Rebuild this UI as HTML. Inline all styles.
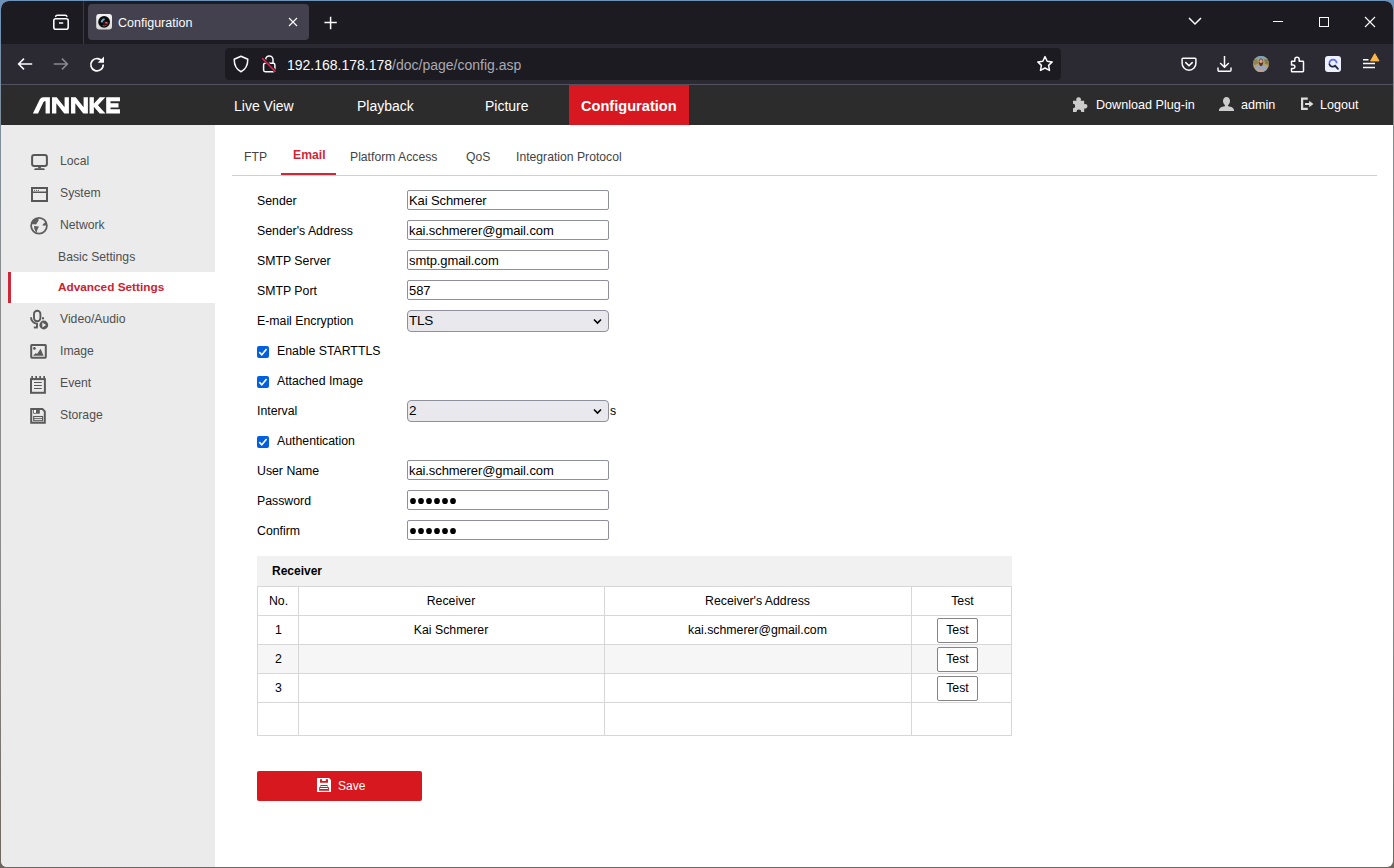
<!DOCTYPE html>
<html><head><meta charset="utf-8">
<style>
*{box-sizing:border-box;margin:0;padding:0}
html,body{width:1394px;height:868px;overflow:hidden}
body{background:linear-gradient(180deg,#6d93bb 0,#7b8ea0 90px,#8c8c8c 300px,#8a8a8a 600px,#6e665c 868px)}
body{font-family:"Liberation Sans",sans-serif;position:relative}
.a{position:absolute;white-space:nowrap}
#win{position:absolute;left:0;top:0;width:1394px;height:868px;background:#fff;clip-path:inset(1px round 8px 8px 6px 6px)}
#frame{position:absolute;left:0;top:0;width:1394px;height:868px;border:1px solid #6f8aa6;border-radius:8px;pointer-events:none}
#tabs{position:absolute;left:0;top:0;width:1394px;height:44px;background:#1c1b22}
#tool{position:absolute;left:0;top:44px;width:1394px;height:40px;background:#2b2a33}
#sep{position:absolute;left:0;top:84px;width:1394px;height:1px;background:#52525e}
#hdr{position:absolute;left:0;top:85px;width:1394px;height:40px;background:#2c2c2c}
#side{position:absolute;left:0;top:125px;width:215px;height:743px;background:#ebebeb}
.nav{color:#fff;font-size:14px;line-height:20px}
.si{color:#4f4f4f;font-size:12.2px;line-height:16px}
.lbl{color:#000;font-size:12.3px;line-height:16px}
.inp{position:absolute;left:407px;width:202px;height:20px;border:1px solid #8f8f9d;border-radius:2px;background:#fff;font-size:13px;line-height:18px;padding-left:1px;padding-top:1px;letter-spacing:-0.1px;color:#000}
.sel{position:absolute;left:407px;width:202px;height:22px;border:1px solid #8f8f9d;border-radius:4px;background:#e9e9ed;font-size:13.5px;line-height:19px;padding-left:1px;color:#000;letter-spacing:-0.3px}
.cb{position:absolute;left:257px;width:12px;height:12px;border-radius:2px;background:#0060df}
.btn{left:937px;width:41px;height:25px;border:1px solid #858585;border-radius:2px;background:#fff;font-size:12.3px;line-height:23px;text-align:center;color:#000}
.tabt{color:#444;font-size:12.2px;line-height:16px}
</style></head><body>
<div id="win">
 <div id="tabs"></div>
 <div class="a" style="left:83px;top:1px;width:1px;height:43px;background:#3a3944"></div>
 <div class="a" style="left:88px;top:4px;width:221px;height:36px;background:#42414d;border-radius:4px"></div>
 <div class="a" style="left:118px;top:15px;color:#fbfbfe;font-size:12.5px;line-height:16px">Configuration</div>

 <div id="tool"></div>
 <div class="a" style="left:225px;top:48px;width:836px;height:32px;background:#1c1b22;border-radius:4px"></div>
 <div class="a" style="left:287px;top:56px;font-size:14px;line-height:18px;color:#fbfbfe">192.168.178.178<span style="color:#a9a9b1">/doc/page/config.asp</span></div>

 <!-- firefox chrome icons -->
 <svg class="a" style="left:50px;top:12px" width="22" height="22" viewBox="0 0 22 22"><path d="M5.7 4.5Q5.7 3.2 7.4 3.2H15.2Q16.9 3.2 16.9 4.5" stroke="#fbfbfe" stroke-width="1.4" stroke-linecap="round" fill="none"/><rect x="3.8" y="6.8" width="14.4" height="10.5" rx="2" fill="none" stroke="#fbfbfe" stroke-width="1.6"/><path d="M9 11h4.2" stroke="#fbfbfe" stroke-width="1.7"/></svg>
 <svg class="a" style="left:96px;top:14px" width="16" height="16" viewBox="0 0 16 16"><defs><linearGradient id="fg" x1="0" y1="0" x2="0" y2="1"><stop offset="0" stop-color="#f6f6f6"/><stop offset="1" stop-color="#d6d6d6"/></linearGradient></defs><rect x="0.2" y="0" width="15.8" height="15.6" rx="3" fill="url(#fg)"/><circle cx="8.1" cy="7.9" r="5.9" fill="#0b0b0b"/><path d="M12 8.6A4 4 0 0 1 6.6 11.6" stroke="#9a9a9a" stroke-width="0.7" fill="none"/><circle cx="9.3" cy="9.2" r="2.2" fill="#4e0b12"/><path d="M5.6 8.4Q6 5.6 8.6 5.1" stroke="#5ab4dc" stroke-width="1.9" fill="none"/><ellipse cx="10.3" cy="8.8" rx="1.2" ry="0.7" fill="#e07a8c"/></svg>
 <svg class="a" style="left:287px;top:16px" width="12" height="12" viewBox="0 0 12 12"><path d="M2 2L10 10M10 2L2 10" stroke="#fbfbfe" stroke-width="1.1"/></svg>
 <svg class="a" style="left:323px;top:15px" width="16" height="16" viewBox="0 0 16 16"><path d="M7.6 1.8v12.4M1.4 7.6h12.4" stroke="#fbfbfe" stroke-width="1.5"/></svg>
 <svg class="a" style="left:1187px;top:15px" width="16" height="12" viewBox="0 0 16 12"><path d="M2 3l6 6 6-6" stroke="#fbfbfe" stroke-width="1.5" fill="none"/></svg>
 <div class="a" style="left:1273px;top:21px;width:10px;height:1px;background:#fbfbfe"></div>
 <div class="a" style="left:1319px;top:17px;width:10px;height:10px;border:1px solid #fbfbfe"></div>
 <svg class="a" style="left:1364px;top:16px" width="12" height="12" viewBox="0 0 12 12"><path d="M1 1L11 11M11 1L1 11" stroke="#fbfbfe" stroke-width="1.1"/></svg>

 <svg class="a" style="left:15px;top:55px" width="20" height="18" viewBox="0 0 20 18"><path d="M3.6 9H17.2M9 3.6L3.6 9L9 14.4" stroke="#fbfbfe" stroke-width="1.5" fill="none"/></svg>
 <svg class="a" style="left:51px;top:55px" width="20" height="18" viewBox="0 0 20 18"><path d="M2.8 9H16.4M11 3.6L16.4 9L11 14.4" stroke="#8a8990" stroke-width="1.5" fill="none"/></svg>
 <svg class="a" style="left:88px;top:55px" width="18" height="18" viewBox="0 0 18 18"><path d="M14.3 6.5A6.2 6.2 0 1 0 15.2 9.5" stroke="#fbfbfe" stroke-width="1.7" fill="none"/><path d="M16 1.5V7.8H9.7z" fill="#fbfbfe"/></svg>

 <svg class="a" style="left:232px;top:55px" width="18" height="18" viewBox="0 0 18 18"><path d="M9 1.2L2.2 4.3c0 6.5 2.3 10.3 6.8 12.4 4.5-2.1 6.8-5.9 6.8-12.4z" stroke="#fbfbfe" stroke-width="1.5" fill="none" stroke-linejoin="round"/></svg>
 <svg class="a" style="left:260px;top:54px" width="18" height="20" viewBox="0 0 18 20"><path d="M5.6 9V5.6a3.7 3.7 0 0 1 7.4 0V9" stroke="#fbfbfe" stroke-width="1.5" fill="none"/><rect x="3.6" y="9.3" width="11.3" height="8.4" rx="1.6" stroke="#fbfbfe" stroke-width="1.5" fill="none"/><path d="M2.4 4L15.6 17.6" stroke="#1c1b22" stroke-width="3"/><path d="M2.2 4.2L15.6 17.7" stroke="#e22850" stroke-width="1.5"/></svg>
 <svg class="a" style="left:1036px;top:55px" width="18" height="18" viewBox="0 0 18 18"><path d="M9 1.6l2.2 4.6 5 .7-3.6 3.5.9 5-4.5-2.4-4.5 2.4.9-5L1.8 6.9l5-.7z" stroke="#fbfbfe" stroke-width="1.5" fill="none" stroke-linejoin="round"/></svg>

 <svg class="a" style="left:1180px;top:56px" width="18" height="17" viewBox="0 0 18 17"><path d="M3 2.2h12a.9.9 0 0 1 .9.9V7A6.9 6.9 0 0 1 9 14.2 6.9 6.9 0 0 1 2.1 7V3.1a.9.9 0 0 1 .9-.9z" stroke="#fbfbfe" stroke-width="1.5" fill="none"/><path d="M5.8 6.6L9 9.7l3.2-3.1" stroke="#fbfbfe" stroke-width="1.6" fill="none" stroke-linecap="round"/></svg>
 <svg class="a" style="left:1216px;top:55px" width="17" height="18" viewBox="0 0 17 18"><path d="M8.5 1v11M4.2 8l4.3 4.3L12.8 8" stroke="#fbfbfe" stroke-width="1.5" fill="none"/><path d="M2 12.5v2.5a1.3 1.3 0 0 0 1.3 1.3h10.4a1.3 1.3 0 0 0 1.3-1.3v-2.5" stroke="#fbfbfe" stroke-width="1.5" fill="none"/></svg>
 <svg class="a" style="left:1253px;top:56px" width="16" height="16" viewBox="0 0 16 16"><defs><clipPath id="cc"><circle cx="8" cy="8" r="8"/></clipPath></defs><g clip-path="url(#cc)"><rect width="16" height="16" fill="#b3a26a"/><rect x="0" y="0" width="16" height="2.6" fill="#6fa4cc"/><path d="M0 4L4 3L6 7L2 9L0 8Z" fill="#8f8456"/><path d="M11 3L16 4V9L12 8Z" fill="#857a50"/><path d="M2 16L2.8 10.5Q4 9 8 9.2Q12 9 13.2 10.5L14 16Z" fill="#97a6bc"/><path d="M6 4.4Q6.3 2.4 8 2.4Q9.8 2.4 10 4.4L10.2 7Q9.8 10 8 10.4Q6.2 10 5.8 7Z" fill="#5a3424"/><ellipse cx="8" cy="5.2" rx="1.6" ry="1.9" fill="#d6a28a"/><path d="M3 13Q6 14.2 9 13.8L12 16H4Z" fill="#cf9f86"/></g></svg>
 <svg class="a" style="left:1289px;top:55px" width="17" height="18" viewBox="0 0 17 18"><path d="M2.6 6.2h3.2V4.4a2.2 2.2 0 0 1 4.4 0v1.8h3.6a.7.7 0 0 1 .7.7v9.2a.7.7 0 0 1-.7.7H3.2a.7.7 0 0 1-.7-.7v-2.5h1.6a1.8 1.8 0 0 0 0-3.6H2.5V6.9a.7.7 0 0 1 .1-.7z" stroke="#fbfbfe" stroke-width="1.5" fill="none" stroke-linejoin="round"/></svg>
 <svg class="a" style="left:1325px;top:56px" width="16" height="16" viewBox="0 0 16 16"><rect width="16" height="16" rx="3" fill="#eef0ff"/><path d="M4.4 7.2a3.6 3.6 0 0 1 7.2 0" stroke="#5b6cf5" stroke-width="1.8" fill="none"/><path d="M4.4 8.2a3.6 3.6 0 0 0 5.8 1.6l2.8 3" stroke="#1d2744" stroke-width="1.8" fill="none" stroke-linecap="round"/></svg>
 <svg class="a" style="left:1360px;top:52px" width="22" height="20" viewBox="0 0 22 20"><path d="M3 7.7h5.5M3 11.5h12M3 15.6h12" stroke="#fbfbfe" stroke-width="1.5"/><path d="M14.8 1.7l4.2 7.2h-8.4z" fill="#ffb74a" stroke="#ffb74a" stroke-width="1" stroke-linejoin="round"/></svg>

 <div id="sep"></div>

 <div id="hdr"></div>
 <div class="a nav" style="left:234px;top:96px">Live View</div>
 <div class="a nav" style="left:357px;top:96px">Playback</div>
 <div class="a nav" style="left:485px;top:96px">Picture</div>
 <div class="a" style="left:569px;top:85px;width:120px;height:40px;background:#d71820"></div>
 <div class="a nav" style="left:581px;top:96px;font-weight:bold;font-size:14.6px">Configuration</div>
 <div class="a" style="left:1096px;top:97px;color:#fff;font-size:12.6px;line-height:16px">Download Plug-in</div>
 <div class="a" style="left:1241px;top:97px;color:#fff;font-size:12.6px;line-height:16px">admin</div>
 <div class="a" style="left:1320px;top:97px;color:#fff;font-size:12.6px;line-height:16px">Logout</div>


 <!-- tabs -->
 <div class="a tabt" style="left:244px;top:149px">FTP</div>
 <div class="a tabt" style="left:293px;top:147px;color:#d02637;font-weight:bold">Email</div>
 <div class="a tabt" style="left:350px;top:149px">Platform Access</div>
 <div class="a tabt" style="left:466px;top:149px">QoS</div>
 <div class="a tabt" style="left:516px;top:149px">Integration Protocol</div>
 <div class="a" style="left:232px;top:175px;width:1145px;height:1px;background:#d0d0d0"></div>
 <div class="a" style="left:281px;top:173px;width:55px;height:2px;background:#d02637"></div>

 <!-- form -->
 <div class="a lbl" style="left:257px;top:193px">Sender</div>
 <div class="inp" style="top:190px">Kai Schmerer</div>
 <div class="a lbl" style="left:257px;top:223px">Sender's Address</div>
 <div class="inp" style="top:220px">kai.schmerer@gmail.com</div>
 <div class="a lbl" style="left:257px;top:253px">SMTP Server</div>
 <div class="inp" style="top:250px">smtp.gmail.com</div>
 <div class="a lbl" style="left:257px;top:283px">SMTP Port</div>
 <div class="inp" style="top:280px">587</div>
 <div class="a lbl" style="left:257px;top:313px">E-mail Encryption</div>
 <div class="sel" style="top:310px">TLS<svg class="a" style="left:185px;top:7px" width="9" height="7" viewBox="0 0 9 7"><path d="M1 1.5L4.5 5L8 1.5" fill="none" stroke="#000" stroke-width="1.6"/></svg></div>

 <div class="cb" style="top:346px"><svg width="12" height="12" viewBox="0 0 12 12" style="position:absolute;left:0;top:0"><path d="M2.3 6.1L4.8 8.7L9.6 3" stroke="#fff" stroke-width="1.6" fill="none"/></svg></div>
 <div class="a lbl" style="left:277px;top:343px">Enable STARTTLS</div>
 <div class="cb" style="top:376px"><svg width="12" height="12" viewBox="0 0 12 12" style="position:absolute;left:0;top:0"><path d="M2.3 6.1L4.8 8.7L9.6 3" stroke="#fff" stroke-width="1.6" fill="none"/></svg></div>
 <div class="a lbl" style="left:277px;top:373px">Attached Image</div>
 <div class="a lbl" style="left:257px;top:403px">Interval</div>
 <div class="sel" style="top:400px">2<svg class="a" style="left:185px;top:7px" width="9" height="7" viewBox="0 0 9 7"><path d="M1 1.5L4.5 5L8 1.5" fill="none" stroke="#000" stroke-width="1.6"/></svg></div>
 <div class="a lbl" style="left:610px;top:403px">s</div>
 <div class="cb" style="top:436px"><svg width="12" height="12" viewBox="0 0 12 12" style="position:absolute;left:0;top:0"><path d="M2.3 6.1L4.8 8.7L9.6 3" stroke="#fff" stroke-width="1.6" fill="none"/></svg></div>
 <div class="a lbl" style="left:277px;top:433px">Authentication</div>
 <div class="a lbl" style="left:257px;top:463px">User Name</div>
 <div class="inp" style="top:460px">kai.schmerer@gmail.com</div>
 <div class="a lbl" style="left:257px;top:493px">Password</div>
 <div class="inp" style="top:490px"><svg class="a" style="left:0;top:0" width="60" height="18" viewBox="0 0 60 18"><ellipse cx="5" cy="10" rx="2.9" ry="3.1" fill="#000"/><ellipse cx="13" cy="10" rx="2.9" ry="3.1" fill="#000"/><ellipse cx="21" cy="10" rx="2.9" ry="3.1" fill="#000"/><ellipse cx="29" cy="10" rx="2.9" ry="3.1" fill="#000"/><ellipse cx="37" cy="10" rx="2.9" ry="3.1" fill="#000"/><ellipse cx="45" cy="10" rx="2.9" ry="3.1" fill="#000"/></svg></div>
 <div class="a lbl" style="left:257px;top:523px">Confirm</div>
 <div class="inp" style="top:520px"><svg class="a" style="left:0;top:0" width="60" height="18" viewBox="0 0 60 18"><ellipse cx="5" cy="10" rx="2.9" ry="3.1" fill="#000"/><ellipse cx="13" cy="10" rx="2.9" ry="3.1" fill="#000"/><ellipse cx="21" cy="10" rx="2.9" ry="3.1" fill="#000"/><ellipse cx="29" cy="10" rx="2.9" ry="3.1" fill="#000"/><ellipse cx="37" cy="10" rx="2.9" ry="3.1" fill="#000"/><ellipse cx="45" cy="10" rx="2.9" ry="3.1" fill="#000"/></svg></div>

 <!-- table -->
 <div class="a" style="left:257px;top:556px;width:755px;height:30px;background:#f1f1f1"></div>
 <div class="a lbl" style="left:272px;top:563px;font-weight:bold;font-size:12px">Receiver</div>
 <div class="a" style="left:257px;top:586px;width:755px;height:150px;border:1px solid #d7d7d7;background:#fff"></div>
 <div class="a" style="left:258px;top:645px;width:753px;height:29px;background:#f6f6f6"></div>
 <div class="a" style="left:257px;top:615px;width:755px;height:1px;background:#d7d7d7"></div>
 <div class="a" style="left:257px;top:644px;width:755px;height:1px;background:#d7d7d7"></div>
 <div class="a" style="left:257px;top:673px;width:755px;height:1px;background:#d7d7d7"></div>
 <div class="a" style="left:257px;top:702px;width:755px;height:1px;background:#d7d7d7"></div>
 <div class="a" style="left:298px;top:586px;width:1px;height:150px;background:#d7d7d7"></div>
 <div class="a" style="left:604px;top:586px;width:1px;height:150px;background:#d7d7d7"></div>
 <div class="a" style="left:911px;top:586px;width:1px;height:150px;background:#d7d7d7"></div>
 <div class="a lbl" style="left:258px;top:593px;width:41px;text-align:center">No.</div>
 <div class="a lbl" style="left:298px;top:593px;width:306px;text-align:center">Receiver</div>
 <div class="a lbl" style="left:604px;top:593px;width:307px;text-align:center">Receiver's Address</div>
 <div class="a lbl" style="left:912px;top:593px;width:101px;text-align:center">Test</div>
 <div class="a lbl" style="left:258px;top:622px;width:41px;text-align:center">1</div>
 <div class="a lbl" style="left:298px;top:622px;width:306px;text-align:center">Kai Schmerer</div>
 <div class="a lbl" style="left:604px;top:622px;width:307px;text-align:center">kai.schmerer@gmail.com</div>
 <div class="a lbl" style="left:258px;top:651px;width:41px;text-align:center">2</div>
 <div class="a lbl" style="left:258px;top:680px;width:41px;text-align:center">3</div>
 <div class="a btn" style="top:618px">Test</div>
 <div class="a btn" style="top:647px">Test</div>
 <div class="a btn" style="top:676px">Test</div>

 <!-- save -->
 <div class="a" style="left:257px;top:771px;width:165px;height:30px;background:#d7191f;border-radius:2px"></div>
 <div class="a" style="left:338px;top:778px;color:#fff;font-size:12px;line-height:16px">Save</div>


 <svg class="a" style="left:28px;top:92px" width="100" height="26" viewBox="0 0 1394 362"><g fill="#fff"><path d="M68 298L165 100Q180 72 215 72H305V298H245V128H232Q222 128 216 140L140 298Z"/><path d="M335 72H400L510 212V72H570V298H505L395 158V298H335Z"/><path d="M600 72H665L775 212V72H835V298H770L660 158V298H600Z"/><path d="M858 72H918V165L1000 72H1078L975 185L1080 298H1000L918 205V298H858Z"/><path d="M1090 72H1282V130H1150V155H1262V215H1150V240H1282V298H1090Z"/></g></svg>
 <svg class="a" style="left:1072px;top:96px" width="17" height="17" viewBox="0 0 17 17"><path fill="#cccccc" d="M1 4.7H4.5A2.4 2.4 0 1 1 8.7 4.7H12.2V8.2A2.3 2.3 0 1 1 12.2 12.4V16H9.3A2.4 2.4 0 1 0 4.5 16H1V12.2A2.2 2.2 0 1 0 1 7.8Z"/></svg>
 <svg class="a" style="left:1218px;top:96px" width="17" height="16" viewBox="0 0 17 16"><path fill="#cccccc" d="M8.5 0.9C6.3 0.9 5 2.7 5 4.9C5 6.6 5.8 8 6.9 8.9V10.2C3.5 10.6 1 12 1 14.3V15H16V14.3C16 12 13.5 10.6 10.1 10.2V8.9C11.2 8 12 6.6 12 4.9C12 2.7 10.7 0.9 8.5 0.9Z"/></svg>
 <svg class="a" style="left:1300px;top:96px" width="15" height="16" viewBox="0 0 15 16"><path d="M7.8 2.7H2.1V12.9H7.8" stroke="#dddddd" stroke-width="2.2" fill="none"/><path d="M5 8H10.5" stroke="#dddddd" stroke-width="2"/><path d="M9.2 4.8L13.4 8L9.2 11.2Z" fill="#dddddd"/></svg>

 <div id="side"></div>
 <div class="a si" style="left:60px;top:153px">Local</div>
 <div class="a si" style="left:60px;top:185px">System</div>
 <div class="a si" style="left:60px;top:217px">Network</div>
 <div class="a si" style="left:58px;top:249px">Basic Settings</div>
 <div class="a" style="left:8px;top:272px;width:207px;height:31px;background:#fff;border-left:3px solid #d02637"></div>
 <div class="a si" style="left:58px;top:279px;color:#cc2233;font-weight:bold;font-size:11.8px">Advanced Settings</div>
 <div class="a si" style="left:60px;top:311px">Video/Audio</div>
 <div class="a si" style="left:60px;top:343px">Image</div>
 <div class="a si" style="left:60px;top:375px">Event</div>
 <div class="a si" style="left:60px;top:407px">Storage</div>

 <svg class="a" style="left:30px;top:153px" width="19" height="18" viewBox="0 0 19 18"><rect x="2.1" y="2.1" width="14.8" height="10.8" rx="2.2" fill="none" stroke="#575757" stroke-width="2"/><rect x="8.2" y="12.5" width="2.7" height="3" fill="#575757"/><path d="M4 17H15L14 15.2H5Z" fill="#575757"/></svg>
 <svg class="a" style="left:30px;top:186px" width="19" height="17" viewBox="0 0 19 17"><rect x="2" y="2" width="15" height="13" fill="none" stroke="#575757" stroke-width="2"/><path d="M2 6.2H17" stroke="#575757" stroke-width="1.4"/><circle cx="4.5" cy="4.3" r="0.6" fill="#575757"/><circle cx="6.5" cy="4.3" r="0.6" fill="#575757"/><circle cx="8.5" cy="4.3" r="0.6" fill="#575757"/></svg>
 <svg class="a" style="left:30px;top:217px" width="18" height="18" viewBox="0 0 18 18"><circle cx="9" cy="8.8" r="7.9" fill="none" stroke="#5f5f5f" stroke-width="1.8"/><path d="M1.5 6.6L3 3.5L5.1 1.4L8.2 1.1L8.7 3.3L7.05 6.05L5.95 7.4L4 7.2L2.4 7.2Z" fill="#5f5f5f"/><path d="M4 9.1L9 9.4L7.9 11.6L7.05 13.8L6.8 15.45L5.4 14.35L4.3 11.6Z" fill="#5f5f5f"/><path d="M14.8 3.85L16.45 5.5L17 8.27L14 8.8L12.3 8.27L13.7 6.6L15.07 5.5Z" fill="#5f5f5f"/></svg>
 <svg class="a" style="left:29px;top:308px" width="22" height="24" viewBox="0 0 22 24"><rect x="5" y="2.8" width="6.4" height="10.4" rx="3.2" fill="none" stroke="#5a5a5a" stroke-width="1.9"/><path d="M2 9.2A6.3 6.3 0 0 0 8 15.6V19.2" fill="none" stroke="#5a5a5a" stroke-width="1.9"/><path d="M4.8 19.5H8.8" stroke="#5a5a5a" stroke-width="1.9"/><rect x="13" y="9.3" width="2" height="2" fill="#5a5a5a"/><circle cx="14.8" cy="17" r="4.4" fill="#5a5a5a"/><path d="M13.3 14.6V19.4L17.1 17Z" fill="#ebebeb"/></svg>
 <svg class="a" style="left:28px;top:342px" width="20" height="19" viewBox="0 0 20 19"><rect x="3.2" y="3" width="14.6" height="12.7" rx="0.6" fill="none" stroke="#5a5a5a" stroke-width="2"/><circle cx="6.4" cy="6.4" r="1.4" fill="#5a5a5a"/><path d="M5 13.8L7.8 11L9 12L12.6 6.8L15.6 13.8Z" fill="#5a5a5a"/></svg>
 <svg class="a" style="left:29px;top:374px" width="19" height="20" viewBox="0 0 19 20"><rect x="2" y="5.1" width="13.9" height="13.7" fill="none" stroke="#5a5a5a" stroke-width="2"/><path d="M2.3 2h1.7v3h-1.7zM6.3 2h1.7v3h-1.7zM10.3 2h1.7v3h-1.7zM14.3 2h1.7v3h-1.7z" fill="#5a5a5a"/><path d="M5 8.5H12.8M5 11.5H12.8M5 14.5H12.8" stroke="#5a5a5a" stroke-width="1"/></svg>
 <svg class="a" style="left:29px;top:406px" width="19" height="19" viewBox="0 0 19 19"><path d="M2.2 3H13.4L15.8 5.4V16.7H2.2Z" fill="none" stroke="#5a5a5a" stroke-width="2" stroke-linejoin="miter"/><rect x="4.2" y="3" width="6.6" height="4.7" fill="#5a5a5a"/><rect x="5" y="4" width="2" height="2.8" fill="#fff"/><rect x="4.7" y="10.5" width="8.9" height="4.2" fill="none" stroke="#5a5a5a" stroke-width="1.1"/><path d="M5 12.6H13.4" stroke="#5a5a5a" stroke-width="0.9"/></svg>
 <svg class="a" style="left:316px;top:777px" width="16" height="16" viewBox="0 0 16 16"><path d="M1 1H13L15 3V15H1Z" fill="#fff"/><path d="M4 2.2H6.1V4H9.8V2.2H12V5.8H4Z" fill="#d7191f"/><path d="M4.6 8H11.4L11.9 9.8L13 10.6V13.8H3.1V10.6L4.1 9.8Z" fill="#d7191f"/><path d="M4.6 9.5H11.4M3.9 11.5H12.1" stroke="#fff" stroke-width="1"/></svg>
</div>

</body></html>
